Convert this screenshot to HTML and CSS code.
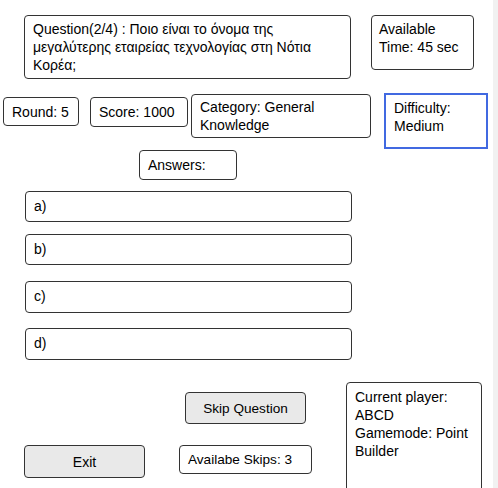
FILE: index.html
```html
<!DOCTYPE html>
<html>
<head>
<meta charset="utf-8">
<link rel="stylesheet" href="styles.css">
</head>
<body>
<div class="page">
  <div class="row-top">
    <div class="box question">Question(2/4) : Ποιο είναι το όνομα της μεγαλύτερης εταιρείας τεχνολογίας στη Νότια Κορέα;</div>
    <div class="box timer">Available Time: 45 sec</div>
  </div>
  <div class="row-info">
    <div class="box round">Round: 5</div>
    <div class="box score">Score: 1000</div>
    <div class="box category">Category: General Knowledge</div>
    <div class="box difficulty">Difficulty: Medium</div>
  </div>
  <div class="box answers-label">Answers:</div>
  <div class="box answer ans-a">a)</div>
  <div class="box answer ans-b">b)</div>
  <div class="box answer ans-c">c)</div>
  <div class="box answer ans-d">d)</div>
  <div class="bottom">
    <div class="bottom-left">
      <button class="btn skip">Skip Question</button>
      <div class="bottom-row">
        <button class="btn exit">Exit</button>
        <div class="box skips">Availabe Skips: 3</div>
      </div>
    </div>
    <div class="box player">Current player: ABCD<br>Gamemode: Point Builder</div>
  </div>
</div>
</body>
</html>
```

FILE: styles.css
```css
* { box-sizing: border-box; }
html {
  overflow: hidden;
  height: 100%;
  background: linear-gradient(to right, #ffffff 0, #ffffff 493px, #f1f1f1 493px);
}
body {
  margin: 0;
  font-family: "Liberation Sans", Arial, sans-serif;
  font-size: 14px;
  line-height: 18px;
  color: #000;
}
.page { width: 493px; }
.box {
  border: 1px solid #333;
  border-radius: 4px;
  padding: 4px 8px;
  background: #fff;
}
.row-top {
  display: flex;
  align-items: flex-start;
  padding-top: 15px;
}
.question { margin-left: 24px; width: 327px; height: 64px; padding-top: 4px; }
.timer { margin-left: 20px; width: 103px; height: 55px; padding-left: 7px; padding-top: 4px; }

.row-info {
  display: flex;
  align-items: flex-start;
  margin-top: 14px;
}
.round { margin-left: 3px; margin-top: 4px; width: 76px; height: 29px; padding-top: 5px; }
.score { margin-left: 11px; margin-top: 4px; width: 98px; height: 30px; padding-top: 5px; }
.category { margin-left: 3px; margin-top: 1px; width: 180px; height: 44px; padding-top: 3px; }
.difficulty {
  margin-left: 13px;
  width: 104px;
  height: 56px;
  border: 2px solid #4169e1;
  border-radius: 0;
  padding: 4px 8px;
}

.answers-label { margin-left: 139px; margin-top: 1px; width: 98px; height: 30px; padding-top: 5px; }
.answer { margin-left: 25px; width: 327px; padding-top: 5px; }
.ans-a { margin-top: 11px; height: 31px; }
.ans-b { margin-top: 12px; height: 31px; }
.ans-c { margin-top: 16px; height: 32px; }
.ans-d { margin-top: 15px; height: 32px; }

.bottom { display: flex; align-items: flex-start; }
.bottom-left { display: flex; flex-direction: column; align-items: flex-start; width: 312px; }
.btn {
  font-family: "Liberation Sans", Arial, sans-serif;
  font-size: 13.6px;
  color: #000;
  background: #e9e9e9;
  border: 1px solid #333;
  border-radius: 4px;
  padding: 0;
}
.skip { margin-left: 185px; margin-top: 32px; width: 121px; height: 32px; }
.bottom-row { display: flex; align-items: flex-start; margin-top: 21px; }
.exit { margin-left: 24px; width: 121px; height: 33px; font-size: 14px; }
.skips { margin-left: 34px; width: 133px; height: 29px; font-size: 13.6px; padding: 5px 8px 0; }
.player { margin-left: 34px; margin-top: 22px; width: 136px; height: 110px; padding-top: 5px; }
```
